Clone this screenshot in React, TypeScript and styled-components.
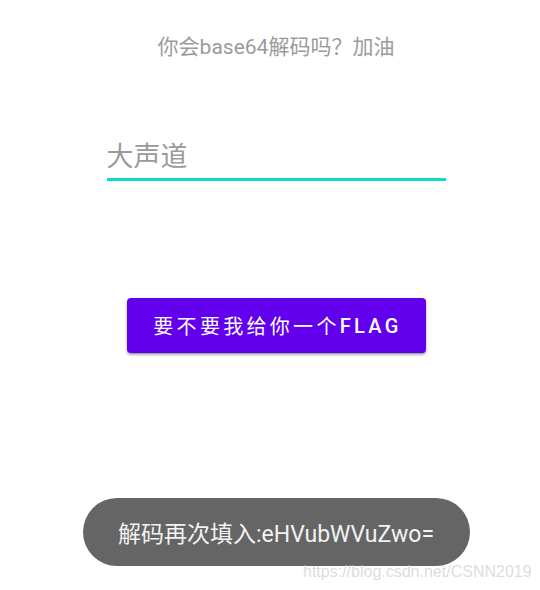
import React from "react";
import styled, { createGlobalStyle } from "styled-components";

const Global = createGlobalStyle`
  html, body {
    margin: 0;
    padding: 0;
    background: #ffffff;
  }
  body {
    font-family: Roboto, "Noto Sans CJK SC", "Noto Sans", sans-serif;
  }
`;

const Screen = styled.div`
  position: relative;
  width: 540px;
  height: 590px;
  box-sizing: border-box;
  padding-left: 12px;
  display: flex;
  flex-direction: column;
  align-items: center;
  overflow: hidden;
`;

const Title = styled.div`
  margin-top: 35px;
  font-size: 21px;
  line-height: 24px;
  color: #9b9b9b;
  white-space: nowrap;
`;

const Field = styled.div`
  margin-top: 81px;
  width: 339px;
  padding-bottom: 4px;
  border-bottom: 3px solid #0bdcc9;
`;

const FieldText = styled.div`
  font-size: 27px;
  line-height: 34px;
  color: #9a9a9a;
`;

const FlagButton = styled.button`
  margin-top: 117px;
  width: 299px;
  height: 55px;
  border: none;
  border-radius: 4px;
  background: #6200ee;
  color: #ffffff;
  font-family: Roboto, "Noto Sans CJK SC", sans-serif;
  font-size: 20px;
  font-weight: 400;
  letter-spacing: 3.3px;
  box-shadow: 0 2px 3px rgba(0, 0, 0, 0.3), 0 1px 1px rgba(0, 0, 0, 0.15);
  display: flex;
  align-items: center;
  justify-content: center;
  padding: 0 0 0 3px;
  cursor: pointer;
`;

const FlagWord = styled.span`
  font-weight: 500;
`;

const Toast = styled.div`
  margin-top: 145px;
  width: 387px;
  height: 68px;
  border-radius: 34px;
  background: #656565;
  color: #f2f2f2;
  font-size: 23px;
  display: flex;
  align-items: center;
  justify-content: center;
  white-space: nowrap;
`;

const Watermark = styled.div`
  position: absolute;
  left: 303px;
  top: 562px;
  font-family: "Liberation Sans", Arial, sans-serif;
  font-size: 16px;
  letter-spacing: 0;
  line-height: 20px;
  color: rgba(205, 205, 205, 0.7);
  white-space: nowrap;
`;

export default function App() {
  return (
    <>
      <Global />
      <Screen>
        <Title>你会base64解码吗？加油</Title>
        <Field>
          <FieldText>大声道</FieldText>
        </Field>
        <FlagButton>
          要不要我给你一个<FlagWord>FLAG</FlagWord>
        </FlagButton>
        <Toast>解码再次填入:eHVubWVuZwo=</Toast>
        <Watermark>https://blog.csdn.net/CSNN2019</Watermark>
      </Screen>
    </>
  );
}
